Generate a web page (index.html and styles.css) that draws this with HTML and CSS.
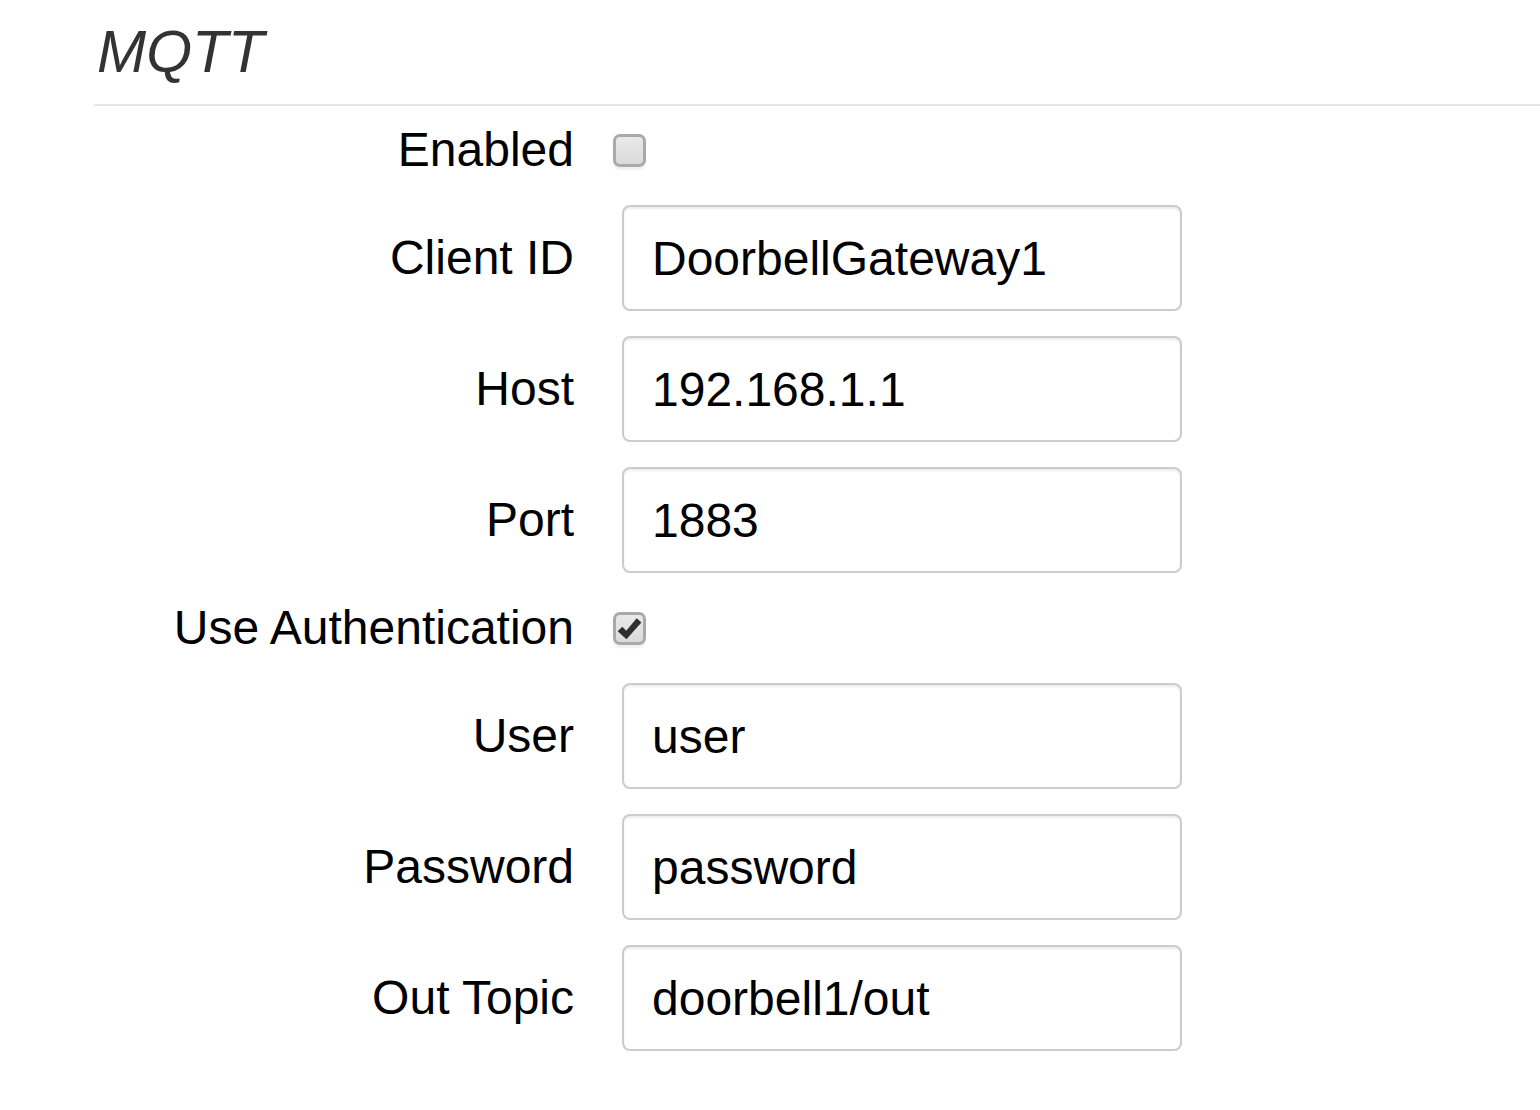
FILE: index.html
```html
<!DOCTYPE html>
<html>
<head>
<meta charset="utf-8">
<link rel="stylesheet" href="styles.css">
</head>
<body>
<div class="page">
  <h1 class="legend">MQTT</h1>
  <div class="rule"></div>
  <form class="form">
    <div class="row check-row">
      <label class="lbl">Enabled</label>
      <div class="field"><span class="cb"></span></div>
    </div>
    <div class="row">
      <label class="lbl">Client ID</label>
      <div class="field"><div class="input">DoorbellGateway1</div></div>
    </div>
    <div class="row">
      <label class="lbl">Host</label>
      <div class="field"><div class="input">192.168.1.1</div></div>
    </div>
    <div class="row">
      <label class="lbl">Port</label>
      <div class="field"><div class="input">1883</div></div>
    </div>
    <div class="row check-row">
      <label class="lbl">Use Authentication</label>
      <div class="field"><span class="cb"><svg class="tick" viewBox="0 0 24 24" width="27" height="27"><path d="M1.5 14.4 L5.6 10.5 L9.1 13.9 L18.4 2.8 L22.6 6.6 L9.3 21.6 Z" fill="#2e2e2e"/></svg></span></div>
    </div>
    <div class="row">
      <label class="lbl">User</label>
      <div class="field"><div class="input">user</div></div>
    </div>
    <div class="row">
      <label class="lbl">Password</label>
      <div class="field"><div class="input">password</div></div>
    </div>
    <div class="row">
      <label class="lbl">Out Topic</label>
      <div class="field"><div class="input">doorbell1/out</div></div>
    </div>
  </form>
</div>
</body>
</html>
```

FILE: styles.css
```css
html, body {
  margin: 0;
  padding: 0;
  background: #fff;
}
body {
  font-family: "Liberation Sans", Arial, Helvetica, sans-serif;
  color: #000;
}
.page {
  padding-left: 94px;
}
.legend {
  margin: 22px 0 0 3px;
  font-size: 59px;
  line-height: 60px;
  font-style: italic;
  font-weight: normal;
  color: #333;
}
.rule {
  margin-top: 22px;
  height: 2px;
  background: #e5e5e5;
}
.form {
  display: flex;
  flex-direction: column;
  gap: 25px;
  padding-top: 14px;
}
.row {
  display: grid;
  grid-template-columns: 480px 560px;
  column-gap: 48px;
  align-items: center;
  height: 106px;
}
.check-row {
  height: 60px;
}
.lbl {
  text-align: right;
  font-size: 48px;
  line-height: 56px;
  color: #000;
}
.field {
  display: flex;
  align-items: center;
}
.input {
  box-sizing: border-box;
  width: 560px;
  height: 106px;
  border: 2px solid #cccccc;
  border-radius: 8px;
  box-shadow: inset 0 2px 2px rgba(0, 0, 0, 0.075);
  padding: 0 28px;
  display: flex;
  align-items: center;
  font-size: 48px;
  color: #000;
}
.cb {
  box-sizing: border-box;
  margin-left: -9px;
  width: 33px;
  height: 33px;
  border: 3px solid #a9a9a9;
  border-radius: 7px;
  background: linear-gradient(#e9e9e9, #dadada);
  box-shadow: 0 3px 2px rgba(0, 0, 0, 0.06);
  display: flex;
  align-items: center;
  justify-content: center;
  overflow: visible;
}
.tick {
  display: block;
  flex: none;
}
```
